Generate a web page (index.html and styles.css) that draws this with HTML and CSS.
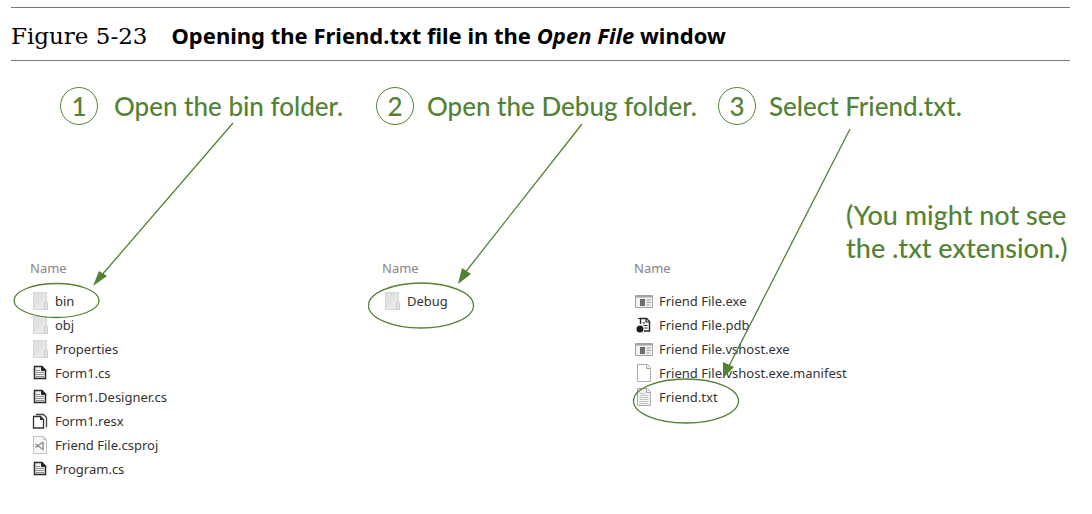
FILE: index.html
```html
<!DOCTYPE html>
<html lang="en">
<head>
<meta charset="utf-8">
<meta name="viewport" content="width=device-width, initial-scale=1">
<title>Figure 5-23</title>
<link rel="stylesheet" href="styles.css">
</head>
<body>
<svg class="defs" aria-hidden="true">
  <defs>
    <linearGradient id="paper" x1="0" y1="0" x2="1" y2="1"><stop offset="0" stop-color="#dcdede"/><stop offset="1" stop-color="#eceeee"/></linearGradient>
    <symbol id="folder" viewBox="0 0 20 20"><path d="M3.500 1.500h13v17h-13z" fill="url(#paper)" stroke="#d6d8d8"/><path d="M14.500 18.500v-7l1-1h1l1 1v7z" fill="#e6e8e8" stroke="#c6c9c9"/></symbol>
    <symbol id="code" viewBox="0 0 20 20"><path d="M4.500 3.500H12L15.500 7v8.500h-11z" fill="#f2f2f2" stroke="#272727" stroke-width="1.500"/><path d="M11 3v5h5z" fill="#272727"/><path d="M6 7.500h4M6 9.500h8M6 11.500h8M6 13.500h8" stroke="#777" stroke-width=".8"/></symbol>
    <symbol id="resx" viewBox="0 0 20 20"><path d="M6 3.500h7.500L16.500 6.500v10" fill="none" stroke="#444" stroke-width="1.300"/><path d="M3.500 5.500h7l3 3v8.500h-10z" fill="#fff" stroke="#333" stroke-width="1.300"/><path d="M10 5v4h4z" fill="#333"/></symbol>
    <symbol id="proj" viewBox="0 0 20 20"><path d="M3.500 1.500h10l3 3v14h-13z" fill="#f7f7f7" stroke="#c2c2c2"/><path d="M13.500 1.500v3h3" fill="none" stroke="#c2c2c2"/><path d="M13 7v7.500L5.500 9M5.500 12.500L13 7" fill="none" stroke="#8a8a8a" stroke-width="1.300"/></symbol>
    <symbol id="app" viewBox="0 0 20 20"><path d="M1.500 4.500h17v12h-17z" fill="#f3f3f3" stroke="#a3a3a3"/><path d="M1.500 5.500h17" stroke="#a3a3a3" stroke-width="2"/><path d="M6 8h5v7H6z" fill="#6d6d6d"/><path d="M12.500 9h4.500M12.500 11.500h4.500M12.500 14h3" stroke="#999"/></symbol>
    <symbol id="pdb" viewBox="0 0 20 20"><path d="M6.500 9V3.500h6L15.500 6.500V16H10" fill="#fff" stroke="#272727" stroke-width="1.400"/><path d="M4 3.500h3M12 3v4h4M8.500 8h2.500M9.500 10.500h4M10.500 13h3" stroke="#272727" stroke-width="1.200" fill="none"/><circle cx="6" cy="14" r="3.500" fill="#1d1d1d"/></symbol>
    <symbol id="blank" viewBox="0 0 20 20"><path d="M3.500 1.500h10l3 3v14h-13z" fill="#fff" stroke="#a9a9a9"/><path d="M12.500 1.500v4h4" fill="#eee" stroke="#a9a9a9"/></symbol>
    <symbol id="text" viewBox="0 0 20 20"><path d="M3.500 1.500h10l3 3v14h-13z" fill="#f5f5f5" stroke="#a9a9a9"/><path d="M12.500 1.500v4h4" fill="#eee" stroke="#a9a9a9"/><path d="M5.500 6.500h6M5.500 8.500h9M5.500 10.500h9M5.500 12.500h9M5.500 14.500h9M5.500 16.500h9" stroke="#c2c2c2"/></symbol>
  </defs>
</svg>
<figure class="figure">
  <figcaption class="caption">
    <span class="number">Figure 5-23</span>
    <span class="title">Opening the Friend.txt file in the <em>Open File</em> window</span>
  </figcaption>
  <div class="diagram">
    <ol class="steps">
      <li class="step first"><span class="badge">1</span>Open the bin folder.</li>
      <li class="step second"><span class="badge">2</span>Open the Debug folder.</li>
      <li class="step third"><span class="badge">3</span>Select Friend.txt.</li>
    </ol>
    <p class="note">(You might not see<br>the .txt extension.)</p>
    <div class="listings">
      <section class="listing project">
        <h2 class="heading">Name</h2>
        <ul class="files">
          <li class="file"><svg class="icon"><use href="#folder"/></svg>bin</li>
          <li class="file"><svg class="icon"><use href="#folder"/></svg>obj</li>
          <li class="file"><svg class="icon"><use href="#folder"/></svg>Properties</li>
          <li class="file"><svg class="icon"><use href="#code"/></svg>Form1.cs</li>
          <li class="file"><svg class="icon"><use href="#code"/></svg>Form1.Designer.cs</li>
          <li class="file"><svg class="icon"><use href="#resx"/></svg>Form1.resx</li>
          <li class="file"><svg class="icon"><use href="#proj"/></svg>Friend File.csproj</li>
          <li class="file"><svg class="icon"><use href="#code"/></svg>Program.cs</li>
        </ul>
      </section>
      <section class="listing bin">
        <h2 class="heading">Name</h2>
        <ul class="files">
          <li class="file"><svg class="icon"><use href="#folder"/></svg>Debug</li>
        </ul>
      </section>
      <section class="listing debug">
        <h2 class="heading">Name</h2>
        <ul class="files">
          <li class="file"><svg class="icon"><use href="#app"/></svg>Friend File.exe</li>
          <li class="file"><svg class="icon"><use href="#pdb"/></svg>Friend File.pdb</li>
          <li class="file"><svg class="icon"><use href="#app"/></svg>Friend File.vshost.exe</li>
          <li class="file"><svg class="icon"><use href="#blank"/></svg>Friend File.vshost.exe.manifest</li>
          <li class="file"><svg class="icon"><use href="#text"/></svg>Friend.txt</li>
        </ul>
      </section>
    </div>
    <svg class="marks" viewBox="11 61 1060 440" aria-hidden="true">
      <g fill="none" stroke="#548235" stroke-width="1.300">
        <path d="M233 123L101 276M582 124L464 274M850 129L729 366"/>
        <ellipse cx="56.500" cy="300.500" rx="42.500" ry="17"/>
        <ellipse cx="421" cy="305.500" rx="52.500" ry="22.500"/>
        <ellipse cx="686" cy="401" rx="52.500" ry="22"/>
      </g>
      <path d="M93 286L99 271L107 276zM458 284L462 268L471 274zM723 378L723 362L734 367z" fill="#548235"/>
    </svg>
  </div>
</figure>
</body>
</html>
```
FILE: styles.css
```css
body {
  margin: 0;
  background: #fff;
  color: #000;
}

.defs {
  position: absolute;
  width: 0;
  height: 0;
}

.figure {
  margin: 0;
  padding: 7px 22px 0 11px;
}

.caption {
  display: flex;
  align-items: baseline;
  gap: 24px;
  padding: 12px 0 9px;
  border-top: 1px solid #777;
  border-bottom: 1px solid #777;
  line-height: 30px;
  white-space: nowrap;
}

.number {
  font-family: "DejaVu Serif", serif;
  font-size: 23px;
}

.title {
  font: bold 22px/30px "Noto Sans", sans-serif;
}

.diagram {
  position: relative;
}

.steps,
.files {
  margin: 0;
  padding: 0;
  list-style: none;
}

.steps {
  display: flex;
  padding: 26px 0 0 49px;
}

.step {
  display: flex;
  align-items: center;
  gap: 16px;
  color: #548235;
  font: 500 26px/38px Lato, sans-serif;
  white-space: nowrap;
}

.first {
  flex: 0 0 316px;
}

.second {
  flex: 0 0 342px;
  gap: 13px;
}

.third {
  gap: 13px;
}

.badge {
  box-sizing: border-box;
  width: 38px;
  height: 38px;
  border: 1px solid #548235;
  border-radius: 50%;
  line-height: 36px;
  text-align: center;
}

.note {
  width: 224px;
  margin: 73px 0 0 835px;
  color: #548235;
  font: 500 27px/33px Lato, sans-serif;
  white-space: nowrap;
}

.listings {
  display: flex;
  margin-top: -8px;
  padding-left: 19px;
  color: #333;
  font: 13px/24px "Noto Sans", sans-serif;
}

.project {
  flex: 0 0 352px;
}

.bin {
  flex: 0 0 252px;
}

.heading {
  margin: 0 0 9px;
  color: #858585;
  font: inherit;
}

.file {
  display: flex;
  align-items: center;
  gap: 5px;
  white-space: nowrap;
}

.icon {
  width: 20px;
  height: 20px;
}

.marks {
  position: absolute;
  top: 0;
  left: 0;
  width: 1060px;
  height: 440px;
  pointer-events: none;
}
```
